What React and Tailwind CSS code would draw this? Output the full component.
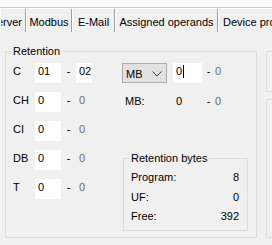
import React from 'react';

const tabs = [
    { label: 'Server', w: 'w-[26px]', align: 'justify-end pr-[3px]' },
    { label: 'Modbus', w: 'w-[46px]', align: 'justify-center' },
    { label: 'E-Mail', w: 'w-[43px]', align: 'justify-center' },
    { label: 'Assigned operands', w: 'w-[103px]', align: 'justify-center' },
    { label: 'Device properties', w: 'w-[110px]', align: 'justify-start pl-[4px]' },
];

const rows = [
    { name: 'C', from: '01', to: '02', edit: true },
    { name: 'CH', from: '0', to: '0' },
    { name: 'CI', from: '0', to: '0' },
    { name: 'DB', from: '0', to: '0' },
    { name: 'T', from: '0', to: '0' },
];

const bytes = [
    { name: 'Program:', value: '8' },
    { name: 'UF:', value: '0' },
    { name: 'Free:', value: '392' },
];

const App = () => {
    return (
        <div className="w-[272px] h-[245px] overflow-hidden bg-[#f0f0f0] font-['Liberation_Sans',sans-serif] text-[11px] text-black">
            {/* Tab strip */}
            <div className="h-[8px] bg-[#fbfbfb] border-b border-[#c8c8c8]" />
            <div className="flex h-[24px] border-t border-white whitespace-nowrap">
                {tabs.map((t) => (
                    <div
                        key={t.label}
                        className={`${t.w} ${t.align} shrink-0 flex items-center pt-[3px] overflow-hidden border-l border-white border-r border-r-[#a0a0a0]`}
                    >
                        <span className="shrink-0">{t.label}</span>
                    </div>
                ))}
            </div>

            {/* Content */}
            <div className="flex gap-[9px] pl-[5px] pt-[12px]">
                <fieldset className="w-[252px] h-[194px] shrink-0 border border-[#dcdcdc] pl-[7px]">
                    <legend className="-ml-[2px] px-[2px] leading-[14px]">Retention</legend>
                    <div className="flex pt-[5px]">
                        {/* Operand ranges */}
                        <div className="flex flex-col gap-[9px]">
                            {rows.map((r) => (
                                <div key={r.name} className="flex items-start h-[20px] leading-[17px]">
                                    <span className="w-[22px]">{r.name}</span>
                                    <span className="w-[26px] h-[20px] bg-white pl-[3px]">{r.from}</span>
                                    <span className="w-[15px] text-center">-</span>
                                    <span className={`w-[16px] h-[20px] pl-[3px] ${r.edit ? 'bg-white' : 'text-[#6d6d6d]'}`}>{r.to}</span>
                                </div>
                            ))}
                        </div>

                        {/* Markers + bytes */}
                        <div className="flex flex-col ml-[30px]">
                            <div className="flex items-start h-[20px] leading-[17px]">
                                <div className="w-[45px] h-[20px] flex items-center justify-between bg-[#e1e1e1] border border-[#adadad] pl-[3px] pr-[4px]">
                                    <span className="leading-[14px] pt-[2px]">MB</span>
                                    <svg width="10" height="6" viewBox="0 0 10 6" className="mt-[1px]">
                                        <polyline points="0.5,0.5 5,5 9.5,0.5" fill="none" stroke="#404040" strokeWidth="1" />
                                    </svg>
                                </div>
                                <div className="w-[29px] h-[20px] bg-white ml-[6px] pl-[3px] flex items-start">
                                    <span>0</span>
                                    <span className="w-px h-[13px] bg-black mt-[2px] ml-[1px]" />
                                </div>
                                <span className="w-[13px] text-center">-</span>
                                <span className="text-[#6d6d6d]">0</span>
                            </div>
                            <div className="flex items-start h-[20px] leading-[17px] mt-[10px]">
                                <span className="w-[51px] pl-[3px]">MB:</span>
                                <span className="w-[29px] pl-[3px]">0</span>
                                <span className="w-[13px] text-center">-</span>
                                <span className="text-[#6d6d6d]">0</span>
                            </div>

                            <fieldset className="w-[125px] ml-[1px] mt-[38px] border border-[#dcdcdc] pl-[7px] pr-[8px] pt-[3px] pb-[3px]">
                                <legend className="-ml-[2px] px-[2px] leading-[14px]">Retention bytes</legend>
                                {bytes.map((b) => (
                                    <div key={b.name} className="flex justify-between leading-[19.5px]">
                                        <span>{b.name}</span>
                                        <span>{b.value}</span>
                                    </div>
                                ))}
                            </fieldset>
                        </div>
                    </div>
                </fieldset>

                {/* Neighbouring groups, cut off at the right */}
                <div className="flex flex-col shrink-0">
                    <div className="w-[40px] h-[41px] mt-[7px] border border-[#dcdcdc]" />
                    <div className="w-[40px] h-[139px] mt-[7px] border border-[#dcdcdc]" />
                </div>
            </div>
        </div>
    );
};

export default App;
